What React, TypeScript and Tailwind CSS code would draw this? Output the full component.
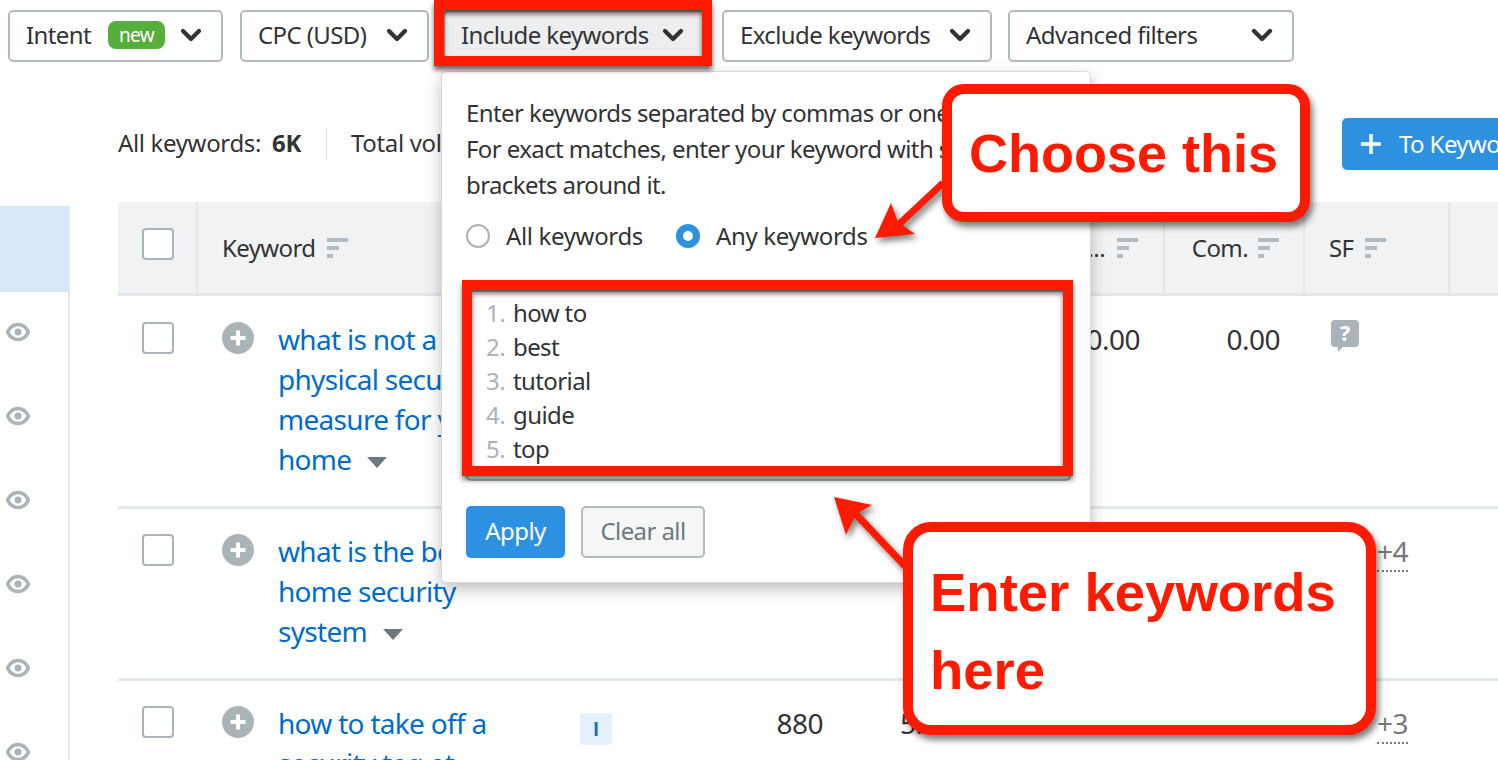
import React from 'react';
import { ChevronDown } from 'lucide-react';

const FONT = "font-['Noto_Sans','Open_Sans',sans-serif]";

const SortIcon = () => (
  <svg width="21" height="20" viewBox="0 0 21 20" className="shrink-0">
    <rect x="0" y="0" width="21" height="4" fill="#b4bcc1" />
    <rect x="0" y="8" width="12" height="4" fill="#b4bcc1" />
    <rect x="0" y="16" width="6" height="4" fill="#b4bcc1" />
  </svg>
);

const EyeIcon = () => (
  <svg width="24" height="20" viewBox="0 0 24 20" fill="none">
    <path d="M1.500 10C4 5 8 2.500 12 2.500S20 5 22.500 10C20 15 16 17.500 12 17.500S4 15 1.500 10Z" stroke="#a9b3b8" strokeWidth="3.500" />
    <circle cx="12" cy="10" r="3.500" fill="#a9b3b8" />
  </svg>
);

const PlusCircle = () => (
  <svg width="32" height="32" viewBox="0 0 32 32" className="shrink-0">
    <circle cx="16" cy="16" r="16" fill="#a9b3b8" />
    <path d="M16 8.500V23.500M8.500 16H23.500" stroke="#fff" strokeWidth="4" />
  </svg>
);

const Caret = () => (
  <svg width="20" height="12" viewBox="0 0 20 12" className="inline-block ml-[16px] align-middle">
    <path d="M0 0H20L10 11Z" fill="#6c7a80" />
  </svg>
);

const Bubble = () => (
  <svg width="28" height="32" viewBox="0 0 28 32">
    <path d="M4 0H24A4 4 0 0 1 28 4V23A4 4 0 0 1 24 27H12L7 32V27H4A4 4 0 0 1 0 23V4A4 4 0 0 1 4 0Z" fill="#a9b3b8" />
    <text x="14" y="21" textAnchor="middle" fontSize="22" fontWeight="700" fill="#fff" fontFamily="Noto Sans">?</text>
  </svg>
);

const Checkbox = () => (
  <div className="w-[32px] h-[32px] rounded-[4px] border-2 border-[#a9b3b8] bg-white shrink-0" />
);

const FilterButton = ({ label, width, active, badge }: { label: string; width: string; active?: boolean; badge?: boolean }) => (
  <div className={`${width} h-[52px] shrink-0 flex items-center justify-between pl-[16px] pr-[14px] pb-[2px] rounded-[5px] border-2 ${active ? 'border-[#a9b3b8] bg-[#edeef0]' : 'border-[#b0babf] bg-white'}`}>
    <span className="flex items-center text-[24px] tracking-[-0.6px] text-[#333]">
      {label}
      {badge && (
        <span className="ml-[17px] w-[57px] h-[28px] rounded-[8px] bg-[#56ae3c] text-white text-[19px] flex items-center justify-center">new</span>
      )}
    </span>
    <ChevronDown className="w-[32px] h-[32px] text-[#333]" strokeWidth={3.200} />
  </div>
);

const KEYWORDS = ['how to', 'best', 'tutorial', 'guide', 'top'];

export default function App() {
  return (
    <div className={`relative w-[1498px] h-[760px] overflow-hidden bg-white ${FONT}`}>
      {/* Filter bar */}
      <div className="flex h-[62px] pt-[10px] pl-[8px]">
        <FilterButton label="Intent" width="w-[215px]" badge />
        <div className="w-[17px]" />
        <FilterButton label="CPC (USD)" width="w-[189px]" />
        <div className="w-[14px]" />
        <FilterButton label="Include keywords" width="w-[262px]" active />
        <div className="w-[17px]" />
        <FilterButton label="Exclude keywords" width="w-[270px]" />
        <div className="w-[16px]" />
        <FilterButton label="Advanced filters" width="w-[286px]" />
      </div>

      <div className="flex">
        {/* Sidebar */}
        <div className="w-[70px] h-[560px] mt-[144px] shrink-0 border-r-2 border-[#e3e7ea]">
          <div className="h-[86px] bg-[#d7e8f8]" />
          <div className="flex flex-col gap-[64px] pt-[30px] pl-[6px]">
            {[0, 1, 2, 3, 4, 5].map((i) => (
              <EyeIcon key={i} />
            ))}
          </div>
        </div>

        {/* Content */}
        <div className="ml-[48px] flex-1 min-w-0">
          <div className="mt-[56px] h-[52px] flex items-center text-[24px] tracking-[-0.35px] text-[#333]">
            <span className="pb-[2px]">All keywords:</span>
            <span className="ml-[11px] pb-[2px] font-bold">6K</span>
            <span className="ml-[25px] w-px h-[32px] bg-[#dfe3e6]" />
            <span className="ml-[24px] pb-[2px]">Total volume: 52,140</span>
            <div className="ml-auto w-[200px] h-[52px] shrink-0 -mr-[44px] rounded-l-[5px] bg-[#2d91e2] text-white flex items-center pl-[18px] overflow-hidden whitespace-nowrap">
              <svg width="22" height="22" viewBox="0 0 22 22" className="shrink-0">
                <path d="M11 1V21M1 11H21" stroke="#fff" strokeWidth="3.500" />
              </svg>
              <span className="ml-[17px] tracking-[-0.6px]">To Keyword Manager</span>
            </div>
          </div>

          {/* Table */}
          <div className="mt-[32px] text-[#333]">
            <div className="flex h-[94px] bg-[#f0f2f4] border-b-[3px] border-[#e3e7ea] text-[24px] tracking-[-0.6px]">
              <div className="w-[80px] pl-[24px] pt-[26px] border-r-2 border-[#e3e7ea]">
                <Checkbox />
              </div>
              <div className="w-[841px] pl-[24px] flex items-center gap-[11px]">
                Keyword <SortIcon />
              </div>
              <div className="w-[126px] flex items-center justify-end gap-[12px] pr-[25px] border-r-2 border-[#e3e7ea]">
                CPC... <SortIcon />
              </div>
              <div className="w-[140px] flex items-center justify-end gap-[10px] pr-[24px] border-r-2 border-[#e3e7ea]">
                Com. <SortIcon />
              </div>
              <div className="w-[145px] flex items-center gap-[12px] pl-[24px] border-r-2 border-[#e3e7ea]">
                SF <SortIcon />
              </div>
            </div>

            <div className="flex h-[213px] border-b-[3px] border-[#e3e7ea]">
              <div className="w-[79px] pl-[24px] pt-[26px]">
                <Checkbox />
              </div>
              <div className="w-[842px] pl-[25px] pt-[26px] flex gap-[24px]">
                <PlusCircle />
                <div className="-mt-[3px] text-[28px] leading-[40px] tracking-[-0.7px] text-[#006dca]">
                  what is not a good<br />physical security<br />measure for your<br />home<Caret />
                </div>
              </div>
              <div className="w-[125px] pr-[24px] pt-[23px] text-right text-[28px] leading-[40px] tracking-[-0.5px]">0.00</div>
              <div className="w-[140px] pr-[24px] pt-[23px] text-right text-[28px] leading-[40px] tracking-[-0.5px]">0.00</div>
              <div className="w-[145px] pl-[27px] pt-[24px]">
                <Bubble />
              </div>
            </div>

            <div className="flex h-[172px] border-b-[3px] border-[#e3e7ea]">
              <div className="w-[79px] pl-[24px] pt-[25px]">
                <Checkbox />
              </div>
              <div className="w-[842px] pl-[25px] pt-[25px] flex gap-[24px]">
                <PlusCircle />
                <div className="-mt-[3px] text-[28px] leading-[40px] tracking-[-0.7px] text-[#006dca]">
                  what is the best<br />home security<br />system<Caret />
                </div>
              </div>
              <div className="w-[265px]" />
              <div className="w-[145px] pl-[73px] pt-[22px]">
                <span className="text-[28px] leading-[40px] tracking-[-0.5px] text-[#777] border-b-2 border-dotted border-[#777]">+4</span>
              </div>
            </div>

            <div className="flex h-[120px]">
              <div className="w-[79px] pl-[24px] pt-[25px]">
                <Checkbox />
              </div>
              <div className="w-[363px] pl-[25px] pt-[25px] flex gap-[24px]">
                <PlusCircle />
                <div className="-mt-[3px] text-[28px] leading-[40px] tracking-[-0.7px] text-[#006dca]">
                  how to take off a<br />security tag at
                </div>
              </div>
              <div className="w-[120px] pl-[20px] pt-[32px]">
                <div className="w-[32px] h-[32px] rounded-[4px] bg-[#e4f0fb] text-[#1d6fbe] text-[20px] font-bold font-['Liberation_Sans',sans-serif] flex items-center justify-center">I</div>
              </div>
              <div className="w-[143px] pt-[22px] text-right text-[28px] leading-[40px] tracking-[-0.5px]">880</div>
              <div className="w-[481px] pl-[77px] pt-[22px] text-[28px] leading-[40px] tracking-[-0.5px]">5.4K</div>
              <div className="w-[145px] pl-[73px] pt-[22px]">
                <span className="text-[28px] leading-[40px] tracking-[-0.5px] text-[#777] border-b-2 border-dotted border-[#777]">+3</span>
              </div>
            </div>
          </div>
        </div>
      </div>

      {/* Include keywords dropdown */}
      <div className="absolute left-[441px] top-[71px] w-[650px] h-[512px] bg-white rounded-[5px] border border-[#d5dadd] shadow-[0_6px_16px_rgba(0,0,0,0.25)] pl-[24px] pt-[23px] text-[#333]">
        <p className="text-[24px] leading-[36px] tracking-[-0.6px]">
          Enter keywords separated by commas or one per line.<br />
          For exact matches, enter your keyword with square<br />
          brackets around it.
        </p>
        <div className="mt-[17px] h-[32px] flex items-center text-[24px] tracking-[-0.35px]">
          <span className="w-[24px] h-[24px] rounded-full border-2 border-[#a9b3b8] bg-white" />
          <span className="ml-[16px]">All keywords</span>
          <span className="ml-[33px] w-[24px] h-[24px] rounded-full border-[7px] border-[#2d91e2] bg-white" />
          <span className="ml-[16px]">Any keywords</span>
        </div>
        <div className="mt-[38px] w-[605px] h-[191px] rounded-[5px] border-2 border-[#a9b3b8] pt-[4px] pl-[18px] text-[24px] leading-[34px] tracking-[-0.6px]">
          {KEYWORDS.map((word, i) => (
            <div key={word} className="flex">
              <span className="w-[27px] text-[#a9b3b8]">{i + 1}.</span>
              <span>{word}</span>
            </div>
          ))}
        </div>
        <div className="mt-[25px] flex gap-[16px] text-[24px] tracking-[-0.6px]">
          <div className="w-[99px] h-[52px] pb-[2px] rounded-[5px] bg-[#2d91e2] text-white flex items-center justify-center">Apply</div>
          <div className="w-[124px] h-[52px] pb-[2px] rounded-[5px] border-2 border-[#b0babf] bg-[#f5f6f6] text-[#6c7a80] flex items-center justify-center">Clear all</div>
        </div>
      </div>

      {/* Red annotation boxes */}
      <div className="absolute left-[434px] top-0 w-[278px] h-[66px] border-[10px] border-[#ff1a00] shadow-[0_4px_5px_rgba(0,0,0,0.6),inset_0_4px_5px_rgba(0,0,0,0.6)]" />
      <div className="absolute left-[462px] top-[280px] w-[611px] h-[196px] border-[10px] border-[#ff1a00] shadow-[0_4px_5px_rgba(0,0,0,0.5),inset_0_4px_5px_rgba(0,0,0,0.5)]" />

      {/* Arrows */}
      <svg width="1498" height="760" viewBox="0 0 1498 760" className="absolute left-0 top-0 pointer-events-none drop-shadow-[3px_4px_3px_rgba(0,0,0,0.5)]">
        <path d="M943 183L895 228" stroke="#ff1a00" strokeWidth="7" fill="none" />
        <path d="M875 238L891 203L898 222L915 234Z" fill="#ff1a00" />
        <path d="M905 566L852 510" stroke="#ff1a00" strokeWidth="7" fill="none" />
        <path d="M834 497L872 505L856 514L846 535Z" fill="#ff1a00" />
      </svg>

      {/* Callouts */}
      <div className="absolute left-[942px] top-[84px] w-[368px] h-[138px] rounded-[22px] border-[10px] border-[#ff1a00] bg-white shadow-[3px_5px_6px_rgba(0,0,0,0.5)] flex items-center pl-[17px] font-['Liberation_Sans',sans-serif] font-bold text-[54px] text-[#ff1a00] whitespace-nowrap">
        Choose this
      </div>
      <div className="absolute left-[903px] top-[522px] w-[473px] h-[213px] rounded-[28px] border-[10px] border-[#ff1a00] bg-white shadow-[3px_5px_6px_rgba(0,0,0,0.5)] pl-[17px] pt-[22px] font-['Liberation_Sans',sans-serif] font-bold text-[54.500px] leading-[78px] text-[#ff1a00]">
        Enter keywords<br />here
      </div>
    </div>
  );
}
